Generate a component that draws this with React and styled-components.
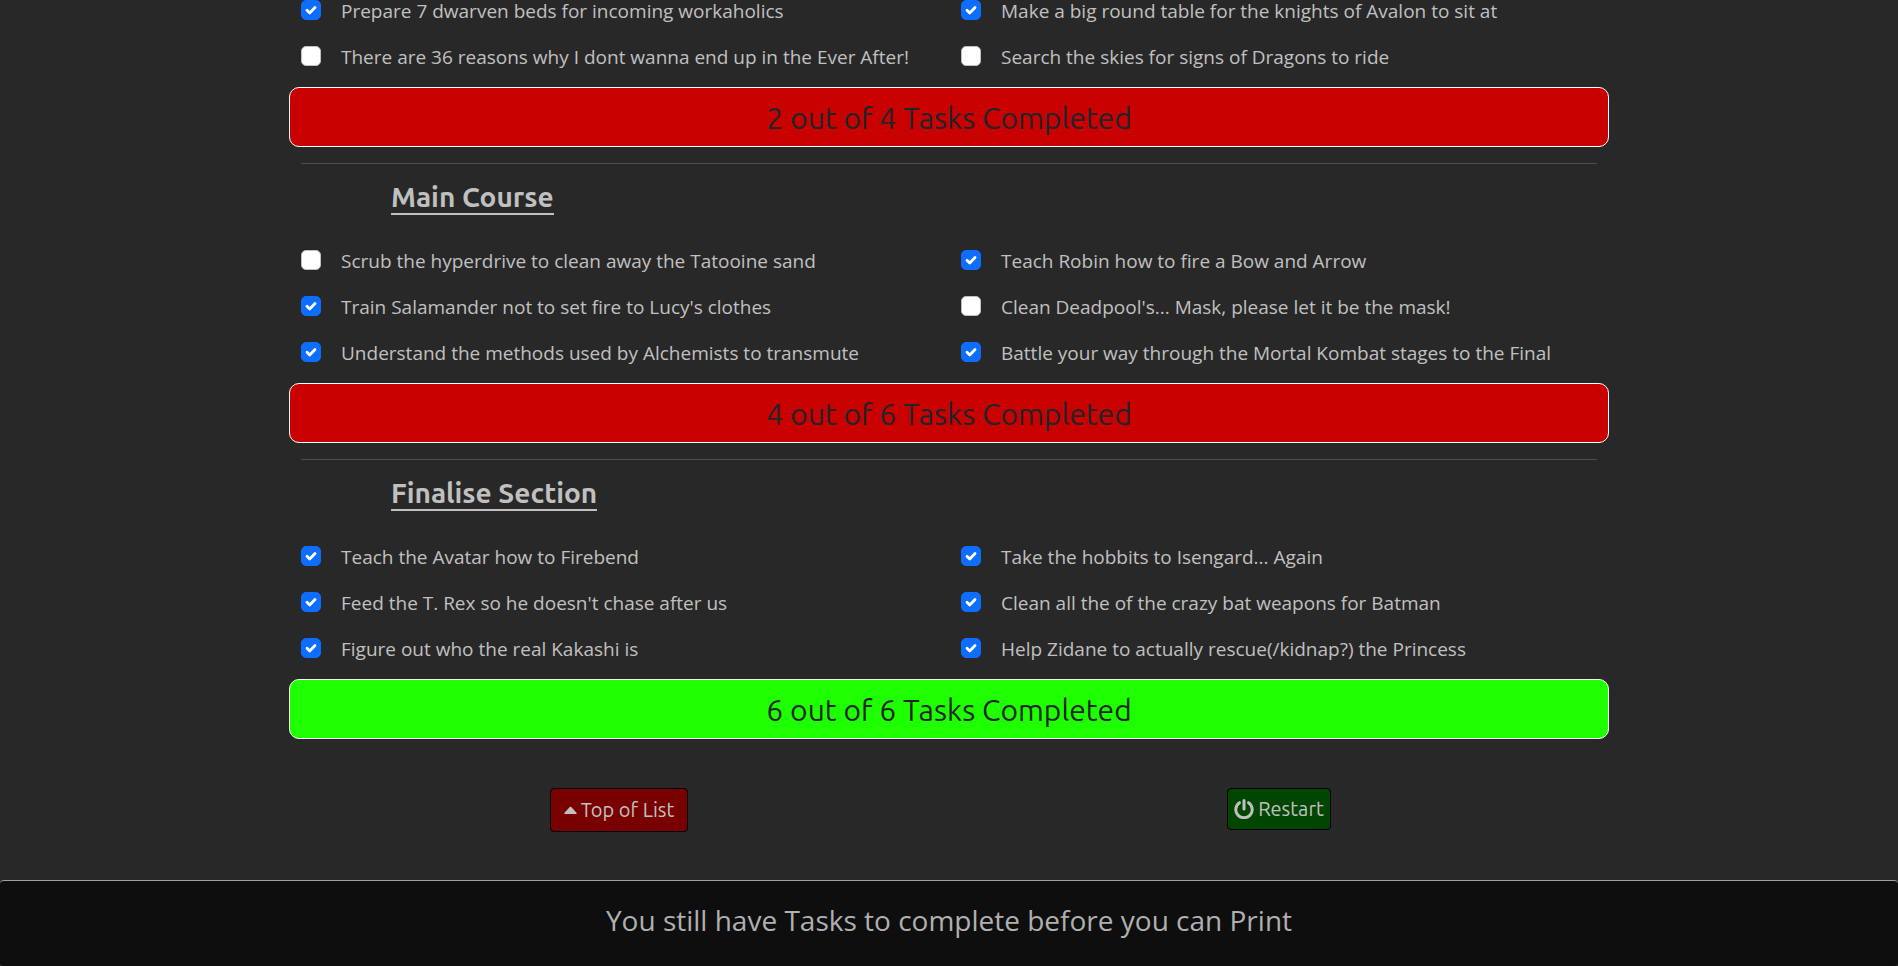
import React, { useState } from "react";
import styled, { createGlobalStyle } from "styled-components";

const heading = '"Ubuntu", "Noto Sans", sans-serif';

const Global = createGlobalStyle`
  *, *::before, *::after { box-sizing: border-box; }
  body { margin: 0; background: #282828; color: #c0c0c0; font: 19px/30px "Segoe UI", "Open Sans", sans-serif; }
`;
const Page = styled.div`display: flex; flex-direction: column; min-height: 100vh;`;
const Container = styled.main`width: 100%; max-width: 1320px; margin: 0 auto;`;
const Section = styled.section`display: block;`;
const Title = styled.h2`
  width: fit-content; height: 33px; margin: 18px 0 35px 102px;
  border-bottom: 2px solid #c0c0c0;
  font: 600 28px/30px ${heading};
`;
const Tasks = styled.ul`
  display: grid; grid-template-columns: 1fr 1fr; row-gap: 16px;
  margin: 0; padding: 0 12px 11px; list-style: none; column-gap: 24px;
`;
const Task = styled.li`display: flex; gap: 20px; height: 30px;`;
const Label = styled.label`line-height: 22px; white-space: nowrap;`;
const Tick = styled.span`
  display: grid; flex: none; width: 20px; height: 20px;
  > * { grid-area: 1 / 1; }
  svg { width: 20px; height: 20px; pointer-events: none; }
`;
const Checkbox = styled.input`
  appearance: none; width: 20px; height: 20px; margin: 0;
  border: 1px solid #bfbfbf; border-radius: 5px; background: #fff;
  &:checked { border-color: #0d6efd; background: #0d6efd; }
`;
const Status = styled.p`
  margin: 0; height: 60px; border: 1px solid #fff; border-radius: 10px;
  background: ${(p) => (p.$done ? "#1eff00" : "#c80000")};
  color: #212529; font: 400 30px/60px ${heading}; text-align: center;
`;
const Rule = styled.hr`height: 1px; margin: 16px 12px 0; border: 0; background: #4e4e4e;`;
const Actions = styled.div`
  display: grid; grid-template-columns: 1fr 1fr; justify-items: center; align-items: start;
  padding: 49px 0 48px;
`;
const Button = styled.button`
  display: flex; align-items: center; gap: 4px;
  height: ${(p) => (p.$wide ? 44 : 42)}px; padding: 0 ${(p) => (p.$wide ? 13 : 6)}px;
  border: 1px solid #000; border-radius: 4px;
  background: ${(p) => (p.$wide ? "#780000" : "#004600")};
  color: #c0c0c0; font: 400 20px/30px ${heading};
`;
const Footer = styled.footer`
  margin-top: auto; height: 86px; border-top: 1px solid #a0a0a0; border-radius: 4px;
  background: #0e0e0e; color: #b0b0b0; font-size: 28px; line-height: 78px; text-align: center;
`;

const sections = [
  { tasks: [
    ["Prepare 7 dwarven beds for incoming workaholics", true],
    ["Make a big round table for the knights of Avalon to sit at", true],
    ["There are 36 reasons why I dont wanna end up in the Ever After!", false],
    ["Search the skies for signs of Dragons to ride", false],
  ] },
  { title: "Main Course", tasks: [
    ["Scrub the hyperdrive to clean away the Tatooine sand", false],
    ["Teach Robin how to fire a Bow and Arrow", true],
    ["Train Salamander not to set fire to Lucy's clothes", true],
    ["Clean Deadpool's... Mask, please let it be the mask!", false],
    ["Understand the methods used by Alchemists to transmute", true],
    ["Battle your way through the Mortal Kombat stages to the Final", true],
  ] },
  { title: "Finalise Section", tasks: [
    ["Teach the Avatar how to Firebend", true],
    ["Take the hobbits to Isengard... Again", true],
    ["Feed the T. Rex so he doesn't chase after us", true],
    ["Clean all the of the crazy bat weapons for Batman", true],
    ["Figure out who the real Kakashi is", true],
    ["Help Zidane to actually rescue(/kidnap?) the Princess", true],
  ] },
];

export default function App() {
  const [done, setDone] = useState(() => sections.map((s) => s.tasks.map((t) => t[1])));
  const toggle = (i, j) =>
    setDone(done.map((row, r) => row.map((v, c) => (r === i && c === j ? !v : v))));
  const all = done.flat().every(Boolean);
  return (
    <Page>
      <Global />
      <Container>
        {sections.map((s, i) => {
          const count = done[i].filter(Boolean).length;
          return (
            <Section key={i}>
              {i > 0 && <Rule />}
              {s.title && <Title>{s.title}</Title>}
              <Tasks>
                {s.tasks.map(([text], j) => (
                  <Task key={j}>
                    <Tick>
                      <Checkbox type="checkbox" id={`t${i}-${j}`} checked={done[i][j]} onChange={() => toggle(i, j)} />
                      {done[i][j] && (
                        <svg viewBox="0 0 20 20" fill="none" stroke="#fff" strokeWidth="2.8" strokeLinecap="round" strokeLinejoin="round" aria-hidden="true">
                          <path d="m6 10.300 2.700 2.700 5.300-5.500" />
                        </svg>
                      )}
                    </Tick>
                    <Label htmlFor={`t${i}-${j}`}>{text}</Label>
                  </Task>
                ))}
              </Tasks>
              <Status $done={count === s.tasks.length}>
                {`${count} out of ${s.tasks.length} Tasks Completed`}
              </Status>
            </Section>
          );
        })}
        <Actions>
          <Button $wide type="button" onClick={() => window.scrollTo(0, 0)}>
            <svg width="13" height="8" viewBox="0 0 13 8" aria-hidden="true"><path d="M1 8h11a.7.7 0 0 0 .5-1.200L7.200 1a1 1 0 0 0-1.400 0L.5 6.800A.7.7 0 0 0 1 8Z" fill="currentColor" /></svg>
            Top of List
          </Button>
          <Button type="button" onClick={() => setDone(done.map((r) => r.map(() => false)))}>
            <svg width="20" height="20" viewBox="0 0 20 20" fill="none" stroke="currentColor" strokeWidth="3" strokeLinecap="round" aria-hidden="true"><path d="M10 1.500v8.500M5.500 3.700a8.200 8.200 0 1 0 9 0" /></svg>
            Restart
          </Button>
        </Actions>
      </Container>
      <Footer>{all ? "Print" : "You still have Tasks to complete before you can Print"}</Footer>
    </Page>
  );
}
